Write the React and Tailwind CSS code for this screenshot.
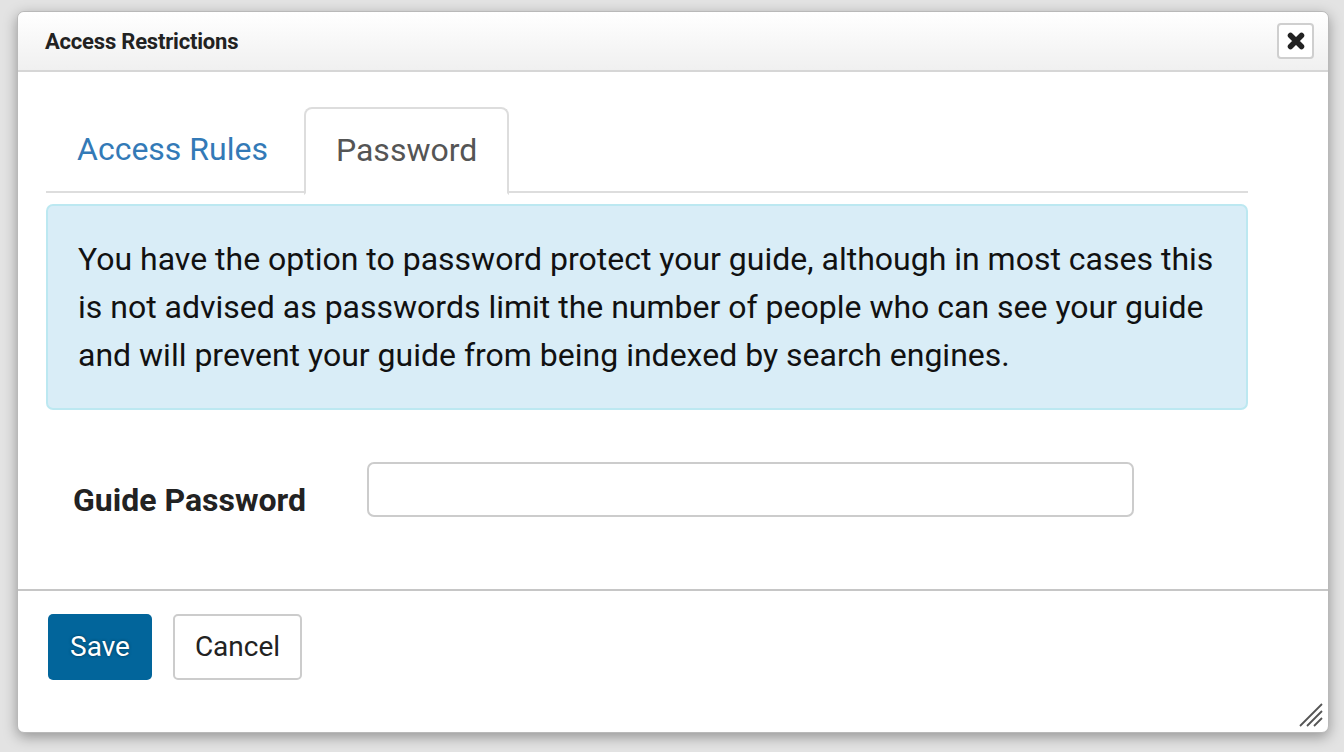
import { useState } from "react";

function CloseIcon() {
  return (
    <svg width="20" height="20" viewBox="0 0 20 20" className="block">
      <path d="M4.5 4.5 L15.5 15.5 M15.5 4.5 L4.5 15.5" stroke="#222" strokeWidth="5.5" strokeLinecap="round" />
    </svg>
  );
}

function ResizeGrip() {
  return (
    <svg width="24" height="24" viewBox="0 0 24 24" className="block">
      <path d="M1 23 L23 1 M8 23 L23 8 M15 23 L23 15" stroke="#555" strokeWidth="1.8" />
    </svg>
  );
}

export default function App() {
  const [tab, setTab] = useState("password");
  const [pw, setPw] = useState("");

  return (
    <div className="w-[1344px] h-[752px] bg-[#e3e3e3] pt-[11px] pl-[17px] font-['Roboto',sans-serif]">
      <div className="relative w-[1312px] h-[722px] bg-white border border-[#b9b9b9] rounded-[7px] shadow-[0_4px_14px_rgba(0,0,0,0.35)] flex flex-col overflow-hidden">
        {/* header */}
        <div className="h-[60px] shrink-0 flex items-center justify-between pl-[27px] pr-[14px] border-b-2 border-[#d6d6d6] bg-linear-to-b from-white to-[#f0f0f0] rounded-t-[7px]">
          <span className="text-[22px] font-bold text-[#222] tracking-[-0.2px]">Access Restrictions</span>
          <button className="w-[37px] h-[36px] flex items-center justify-center bg-white border-2 border-[#cfcfcf] rounded-[4px]">
            <CloseIcon />
          </button>
        </div>

        {/* body */}
        <div className="flex-1 pl-[28px] pr-[80px] pt-[35px]">
          <div className="flex gap-[4px] border-b-2 border-[#ddd] h-[86px]">
            <button
              onClick={() => setTab("rules")}
              className="pl-[31px] pr-[32px] h-[86px] pb-[2px] text-[32px] text-[#337ab7] mb-[-2px]"
            >
              Access Rules
            </button>
            <button
              onClick={() => setTab("password")}
              className="px-[30px] h-[88px] pb-[2px] text-[32px] text-[#555] bg-white border-2 border-[#ddd] border-b-white rounded-t-[8px] mb-[-2px]"
            >
              Password
            </button>
          </div>

          <div className="mt-[11px] bg-[#d9edf7] border-2 border-[#bce8f1] rounded-[7px] pt-[29px] pb-[29px] px-[30px] text-[32px] leading-[48px] text-[#111]">
            You have the option to password protect your guide, although in most cases this is not
            advised as passwords limit the number of people who can see your guide and will prevent
            your guide from being indexed by search engines.
          </div>

          <div className="flex items-start mt-[52px]">
            <label className="w-[321px] pl-[27px] pt-[14px] text-[32px] font-bold text-[#222]">Guide Password</label>
            <input
              type="password"
              value={pw}
              onChange={(e) => setPw(e.target.value)}
              className="w-[767px] h-[55px] border-2 border-[#ccc] rounded-[7px] px-3 text-[28px] outline-none"
            />
          </div>
        </div>

        {/* footer */}
        <div className="h-[143px] shrink-0 border-t-2 border-[#c6c6c6] pt-[23px] pl-[30px] flex gap-[21px] items-start">
          <button className="w-[104px] h-[66px] bg-[#02659b] text-white text-[28px] rounded-[5px] [text-shadow:0_0_3px_rgba(0,0,0,0.5)]">
            Save
          </button>
          <button className="w-[129px] h-[66px] bg-white border-2 border-[#ccc] text-[#222] text-[28px] rounded-[5px]">
            Cancel
          </button>
        </div>

        <div className="absolute right-[5px] bottom-[5px]">
          <ResizeGrip />
        </div>
      </div>
    </div>
  );
}
